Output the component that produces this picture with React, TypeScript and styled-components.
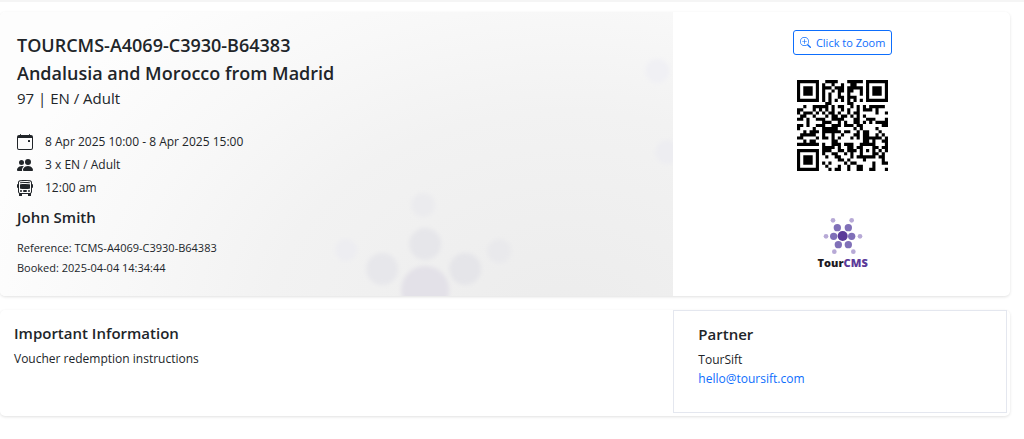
import React from "react";
import styled, { createGlobalStyle } from "styled-components";
import { BsBusFront, BsCalendarEvent, BsPeopleFill, BsZoomIn } from "react-icons/bs";

const GlobalStyle = createGlobalStyle`
  *, *::before, *::after { box-sizing: border-box; }
  body {
    margin: 0;
    background: #fff;
    color: #212529;
    font-family: "Open Sans", "Noto Sans", sans-serif;
    font-size: 12px;
    line-height: 19px;
  }
  h1, h2, h3, p, ul { margin: 0; padding: 0; }
`;

/* ---- QR code: version 3, error correction H, mask 1, byte mode ---- */

const SIZE = 29;
const DATA_PER_BLOCK = 13;
const EC_PER_BLOCK = 22;
const FORMAT_BITS = 0b001001110111110;

function gfMultiply(a: number, b: number) {
  let r = 0;
  for (let i = 7; i >= 0; i--) {
    r = (r << 1) ^ ((r >>> 7) * 0x11d);
    r ^= ((b >>> i) & 1) * a;
  }
  return r & 255;
}

function errorCorrection(data: number[], count: number) {
  const divisor: number[] = new Array(count).fill(0);
  divisor[count - 1] = 1;
  let root = 1;
  for (let i = 0; i < count; i++) {
    for (let j = 0; j < count; j++) {
      divisor[j] = gfMultiply(divisor[j], root);
      if (j + 1 < count) divisor[j] ^= divisor[j + 1];
    }
    root = gfMultiply(root, 2);
  }
  const result: number[] = new Array(count).fill(0);
  for (const byte of data) {
    const factor = byte ^ (result.shift() as number);
    result.push(0);
    divisor.forEach((c, i) => {
      result[i] ^= gfMultiply(c, factor);
    });
  }
  return result;
}

function encodeCodewords(text: string) {
  const bits: number[] = [];
  const push = (value: number, length: number) => {
    for (let i = length - 1; i >= 0; i--) bits.push((value >> i) & 1);
  };
  push(4, 4);
  push(text.length, 8);
  for (const c of text) push(c.charCodeAt(0), 8);
  push(0, 4);
  const words: number[] = [];
  for (let i = 0; i < bits.length; i += 8) words.push(parseInt(bits.slice(i, i + 8).join(""), 2));
  for (let pad = 0xec; words.length < DATA_PER_BLOCK * 2; pad ^= 0xec ^ 0x11) words.push(pad);

  const first = words.slice(0, DATA_PER_BLOCK);
  const second = words.slice(DATA_PER_BLOCK, DATA_PER_BLOCK * 2);
  const firstEc = errorCorrection(first, EC_PER_BLOCK);
  const secondEc = errorCorrection(second, EC_PER_BLOCK);
  return [
    ...first.flatMap((w, i) => [w, second[i]]),
    ...firstEc.flatMap((w, i) => [w, secondEc[i]]),
  ];
}

function qrModules(text: string): number[][] {
  const words = encodeCodewords(text);
  const m: (number | null)[][] = Array.from({ length: SIZE }, () => new Array(SIZE).fill(null));

  const finder = (row: number, col: number) => {
    for (let y = -1; y <= 7; y++) {
      for (let x = -1; x <= 7; x++) {
        const r = row + y;
        const c = col + x;
        if (r < 0 || c < 0 || r >= SIZE || c >= SIZE) continue;
        const d = Math.max(Math.abs(y - 3), Math.abs(x - 3));
        m[r][c] = d === 2 || d === 4 ? 0 : 1;
      }
    }
  };
  finder(0, 0);
  finder(0, SIZE - 7);
  finder(SIZE - 7, 0);
  for (let y = -2; y <= 2; y++) {
    for (let x = -2; x <= 2; x++) {
      m[22 + y][22 + x] = Math.max(Math.abs(y), Math.abs(x)) === 1 ? 0 : 1;
    }
  }
  for (let i = 8; i < SIZE - 8; i++) {
    m[6][i] = m[i][6] = i % 2 ? 0 : 1;
  }

  const bit = (i: number) => (FORMAT_BITS >> i) & 1;
  for (let i = 0; i <= 5; i++) m[i][8] = bit(i);
  m[7][8] = bit(6);
  m[8][8] = bit(7);
  m[8][7] = bit(8);
  for (let i = 9; i < 15; i++) m[8][14 - i] = bit(i);
  for (let i = 0; i < 8; i++) m[8][SIZE - 1 - i] = bit(i);
  for (let i = 8; i < 15; i++) m[SIZE - 15 + i][8] = bit(i);
  m[SIZE - 8][8] = 1;

  let k = 0;
  for (let right = SIZE - 1; right >= 1; right -= 2) {
    if (right === 6) right = 5;
    const upward = ((right + 1) & 2) === 0;
    for (let v = 0; v < SIZE; v++) {
      const y = upward ? SIZE - 1 - v : v;
      for (let x = right; x > right - 2; x--) {
        if (m[y][x] !== null) continue;
        const value = k < words.length * 8 ? (words[k >> 3] >> (7 - (k & 7))) & 1 : 0;
        k++;
        m[y][x] = value ^ (y % 2 === 0 ? 1 : 0);
      }
    }
  }
  return m as number[][];
}

function QrCode({ value }: { value: string }) {
  const path = qrModules(value)
    .flatMap((row, y) => row.map((on, x) => (on ? `M${x} ${y}h1v1h-1z` : "")))
    .join("");
  return (
    <QrDrawing viewBox={`0 0 ${SIZE} ${SIZE}`} role="img" aria-label="Voucher QR code">
      <path d={path} fill="#000" />
    </QrDrawing>
  );
}

/* ---- Layout ---- */

const Page = styled.main`
  display: flex;
  flex-direction: column;
  gap: 14px;
  padding: 10px 14px 24px 0;
  border-top: 2px solid #f5f5f5;
`;

const Card = styled.section`
  display: grid;
  grid-template-columns: 2fr 1fr;
  background: #fff;
  border-radius: 5px;
  box-shadow: 0 1px 3px rgba(0, 0, 0, 0.12);
`;

const Summary = styled.div`
  position: relative;
  overflow: hidden;
  padding: 19px 17px 18px;
  border-radius: 5px 0 0 5px;
  background: radial-gradient(ellipse 88% 150% at 84% 110%, #ececec 0%, #f2f2f2 50%, #f8f8f8 75%, #fdfdfd 100%);
`;

const Backdrop = styled.svg`
  position: absolute;
  inset: 0;
  width: 100%;
  height: 100%;
`;

const Content = styled.div`
  position: relative;
`;

const Title = styled.h1`
  font-size: 18px;
  font-weight: 600;
  line-height: 28px;
`;

const Rate = styled.p`
  font-size: 15px;
  line-height: 22px;
`;

const Details = styled.ul`
  margin: 21px 0 6px;
  list-style: none;
`;

const Detail = styled.li`
  display: flex;
  align-items: center;
  gap: 12px;
  line-height: 23px;

  svg {
    width: 16px;
    height: 16px;
  }
`;

const Heading = styled.h2`
  font-size: 15px;
  font-weight: 600;
  line-height: 24px;
`;

const Meta = styled.div`
  margin-top: 9px;
  font-size: 11px;
  line-height: 20px;
`;

const Scan = styled.div`
  display: flex;
  flex-direction: column;
  align-items: center;
  padding: 18px 0 0 2px;
`;

const ZoomButton = styled.button`
  display: flex;
  align-items: center;
  gap: 5px;
  height: 25px;
  padding: 0 6px;
  border: 1px solid #0d6efd;
  border-radius: 3px;
  background: #fff;
  color: #0d6efd;
  font: inherit;
  font-size: 11px;
  cursor: pointer;
`;

const QrDrawing = styled.svg`
  width: 91px;
  height: 91px;
  margin: 25px 0 46px;
`;

const Logo = styled.div`
  display: flex;
  flex-direction: column;
  align-items: center;
  color: #1d1a22;
  font-size: 11px;
  font-weight: 800;
  line-height: 16px;
`;

const LogoMark = styled.svg`
  width: 40px;
  height: 38px;
`;

const LogoAccent = styled.span`
  color: #5b3a99;
`;

const Notes = styled.div`
  min-height: 104px;
  padding: 11px 14px;

  p {
    margin-top: 4px;
  }
`;

const Partner = styled.aside`
  margin: 0 3px 3px 0;
  padding: 11px 24px 24px;
  border: 1px solid #e4e7ef;

  p {
    margin-top: 4px;
  }
`;

const MailLink = styled.a`
  color: #0d6efd;
  text-decoration: none;
`;

const backdropDots = [
  { x: 657, y: 59, r: 12, fill: "#f0f0f4" },
  { x: 667, y: 140, r: 12, fill: "#ededf1" },
  { x: 423, y: 193, r: 12, fill: "#ebebee" },
  { x: 425, y: 232, r: 16, fill: "#e6e6ea" },
  { x: 346, y: 238, r: 11, fill: "#ededf1" },
  { x: 382, y: 257, r: 16, fill: "#e7e7eb" },
  { x: 465, y: 257, r: 16, fill: "#e5e5e9" },
  { x: 499, y: 239, r: 12, fill: "#e9e9ec" },
  { x: 425, y: 278, r: 24, fill: "#e3e1e8" },
];

const logoDots = [
  { r: 7, fill: "#b7a9d6", points: [[78, 46], [134, 46], [57, 94], [159, 94], [82, 140], [139, 140]] },
  { r: 11, fill: "#8070b8", points: [[91, 68], [124, 68], [80, 94], [134, 94], [94, 119], [124, 119]] },
  { r: 15, fill: "#5b3a99", points: [[107, 93]] },
];

export default function App() {
  return (
    <>
      <GlobalStyle />
      <Page>
        <Card>
          <Summary>
            <Backdrop viewBox="0 0 673 284" preserveAspectRatio="xMaxYMax slice" aria-hidden="true">
              <filter id="soft">
                <feGaussianBlur stdDeviation="2" />
              </filter>
              <g filter="url(#soft)">
                {backdropDots.map((d) => (
                  <circle key={`${d.x}-${d.y}`} cx={d.x} cy={d.y} r={d.r} fill={d.fill} />
                ))}
              </g>
            </Backdrop>
            <Content>
              <Title>
                TOURCMS-A4069-C3930-B64383
                <br />
                Andalusia and Morocco from Madrid
              </Title>
              <Rate>97 | EN / Adult</Rate>
              <Details>
                <Detail>
                  <BsCalendarEvent />
                  8 Apr 2025 10:00 - 8 Apr 2025 15:00
                </Detail>
                <Detail>
                  <BsPeopleFill />3 x EN / Adult
                </Detail>
                <Detail>
                  <BsBusFront />
                  12:00 am
                </Detail>
              </Details>
              <Heading>John Smith</Heading>
              <Meta>
                <p>Reference: TCMS-A4069-C3930-B64383</p>
                <p>Booked: 2025-04-04 14:34:44</p>
              </Meta>
            </Content>
          </Summary>
          <Scan>
            <ZoomButton type="button">
              <BsZoomIn />
              Click to Zoom
            </ZoomButton>
            <QrCode value="TOURCMS|4069|64383|3930" />
            <Logo>
              <LogoMark viewBox="48 36 120 114" aria-hidden="true">
                {logoDots.map((ring) =>
                  ring.points.map(([x, y]) => (
                    <circle key={`${x}-${y}`} cx={x} cy={y} r={ring.r} fill={ring.fill} />
                  ))
                )}
              </LogoMark>
              <span>
                Tour<LogoAccent>CMS</LogoAccent>
              </span>
            </Logo>
          </Scan>
        </Card>
        <Card>
          <Notes>
            <Heading>Important Information</Heading>
            <p>Voucher redemption instructions</p>
          </Notes>
          <Partner>
            <Heading>Partner</Heading>
            <p>TourSift</p>
            <MailLink href="mailto:hello@toursift.com">hello@toursift.com</MailLink>
          </Partner>
        </Card>
      </Page>
    </>
  );
}
